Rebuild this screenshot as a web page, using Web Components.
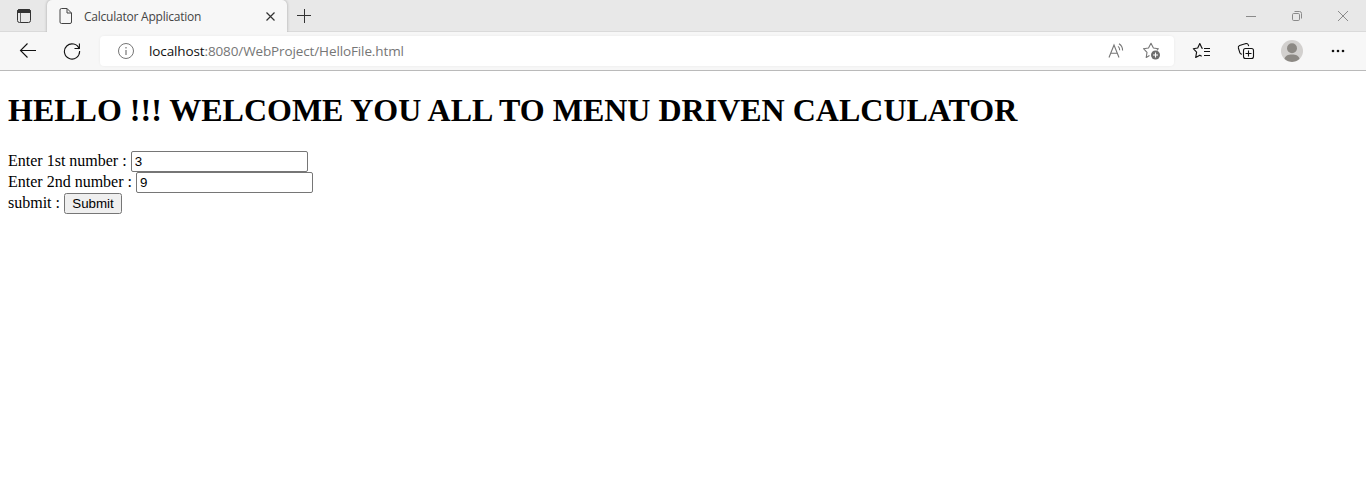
<!DOCTYPE html>
<html lang="en">
<head>
<meta charset="utf-8">
<title>Calculator Application</title>
<style>
html,body{margin:0;height:100%;background:#fff;overflow:hidden}
</style>
</head>
<body>
<browser-window>
  <tab-strip slot="tabs"><browser-tab>Calculator Application</browser-tab></tab-strip>
  <tool-bar slot="toolbar"><address-bar><span slot="host">localhost</span><span slot="path">:8080/WebProject/HelloFile.html</span></address-bar></tool-bar>
  <calculator-page>
    <span slot="title">HELLO !!! WELCOME YOU ALL TO MENU DRIVEN CALCULATOR</span>
    <number-field value="3">Enter 1st number :</number-field>
    <number-field value="9">Enter 2nd number :</number-field>
    <submit-field>submit :</submit-field>
  </calculator-page>
</browser-window>
<script>
const define = (name, html) => {
  const t = document.createElement('template');
  t.innerHTML = html;
  customElements.define(name, class extends HTMLElement {
    constructor() {
      super();
      this.attachShadow({mode: 'open'}).append(t.content.cloneNode(true));
    }
    connectedCallback() {
      const input = this.shadowRoot.querySelector('input');
      if (input) input.value = this.getAttribute('value') || '';
    }
  });
};

define('browser-window', `
<style>:host{display:flex;flex-direction:column;height:477px;width:1366px;background:#fff}</style>
<slot name="tabs"></slot><slot name="toolbar"></slot><slot></slot>`);

define('tab-strip', `
<style>
:host{display:flex;height:32px;background:#e8e8e8;box-shadow:inset 0 -1px #dadada}
svg{display:block;fill:none;flex:none}
.left{width:47px;height:32px;box-sizing:border-box;padding:8px 0 0 16px;border-bottom-right-radius:4px}
.plus{padding:8px 0 0 9px}
.controls{margin-left:auto;display:flex;padding-top:8px;gap:30px;padding-right:15px}
</style>
<div class="left"><svg width="16" height="16" viewBox="0 0 16 16" stroke="#333"><rect x="1.5" y="1.5" width="13" height="13" rx="2"/><path d="M1.5 3.5A2 2 0 0 1 3.5 1.5h9a2 2 0 0 1 2 2V4.5h-13z" fill="#333"/><path d="M4.5 5v9.5" stroke="#666"/></svg></div>
<slot></slot>
<div class="plus"><svg width="16" height="16" viewBox="0 0 16 16" stroke="#333"><path d="M1 7.5h14M8.5 1v14"/></svg></div>
<div class="controls">
<svg width="16" height="16" viewBox="0 0 16 16" stroke="#8a8a8a"><path d="M3 8.5h10"/></svg>
<svg width="16" height="16" viewBox="0 0 16 16" stroke="#8a8a8a"><rect x="3.5" y="5.5" width="7" height="7" rx="1.2"/><path d="M5.5 3.5h5a2 2 0 0 1 2 2v5"/></svg>
<svg width="16" height="16" viewBox="0 0 16 16" stroke="#8a8a8a"><path d="M3 3l10 10M13 3L3 13"/></svg>
</div>`);

define('browser-tab', `
<style>
:host{display:flex;align-items:center;box-sizing:border-box;width:240px;height:32px;background:#f7f7f7;border-radius:5px 5px 0 0;box-shadow:0 0 3px #0000004d;clip-path:inset(0 -4px);padding:0 8px 0 11px;font:12px "Open Sans",sans-serif;color:#444}
svg{fill:none;flex:none}
span{margin-left:10px;flex:1;white-space:nowrap;letter-spacing:-.23px}
</style>
<svg width="16" height="18" viewBox="0 0 16 18" stroke="#444"><path d="M3.5 1.5H9L13.5 6v9a1.5 1.5 0 0 1-1.5 1.5H3.5A1.5 1.5 0 0 1 2 15V3a1.5 1.5 0 0 1 1.5-1.5zM9 1.5V6h4.5"/></svg>
<span><slot></slot></span>
<svg width="16" height="16" viewBox="0 0 16 16" stroke="#333" stroke-width="1.2"><path d="M3.5 4.5l8 8M11.5 4.5l-8 8"/></svg>`);

define('tool-bar', `
<style>
:host{display:flex;align-items:center;box-sizing:border-box;height:39px;background:#f7f7f7;border-bottom:1px solid #bababa;padding:0 18px 0 19px}
svg{display:block;fill:none;flex:none}
.nav,.actions{display:flex;align-items:center}
.nav{gap:26px;width:81px;flex:none}
.actions{padding-left:18px}
.col{margin-left:25px}.user{margin-left:24px}.more{margin-left:26px}
</style>
<div class="nav">
<svg width="18" height="18" viewBox="0 0 18 18" stroke="#111" stroke-width="1.1"><path d="M17 8.5H1.5M8.5 1.5l-7 7 7 7"/></svg>
<svg width="18" height="18" viewBox="0 0 18 18" stroke="#111" stroke-width="1.1"><path d="M16.2 7A7.6 7.6 0 1 0 16.6 9M16.4 1.5v5H11.5"/></svg>
</div>
<slot></slot>
<div class="actions">
<svg width="20" height="18" viewBox="0 0 20 18" stroke="#111" stroke-width="1.15" stroke-linejoin="round"><path d="M12 6.5h6M12 9.5h6M12 13.5h6"/><path d="M10.8 6.2H10L7.8 1.5 5.7 6l-4.4.7 3.3 3.4-.9 5.4 4.1-2.3 1.9 1"/></svg>
<svg class="col" width="20" height="20" viewBox="0 0 20 20" stroke="#111" stroke-width="1.1"><rect x="6.5" y="7.5" width="10" height="10" rx="2"/><path d="M11.5 9.5v6M8.5 12.5h6M5 13.3l-1-.4a2 2 0 0 1-1.2-1.3L1.4 7a2 2 0 0 1 1.2-2.4L9 2.6a2 2 0 0 1 2.3 1.3l.4 1.3"/></svg>
<svg class="user" width="22" height="22" viewBox="0 0 22 22"><circle cx="11" cy="11" r="11" fill="#d2d0ce"/><circle cx="11" cy="8.3" r="5" fill="#8c8984"/><path d="M3.5 19C4 16 7 14.6 11 14.6s7 1.4 7.5 4.4A11 11 0 0 1 3.5 19z" fill="#8c8984"/></svg>
<svg class="more" width="18" height="18" viewBox="0 0 18 18"><g fill="#111"><circle cx="4" cy="9" r="1.3"/><circle cx="9" cy="9" r="1.3"/><circle cx="14" cy="9" r="1.3"/></g></svg>
</div>`);

define('address-bar', `
<style>
:host{display:flex;align-items:center;box-sizing:border-box;width:1074px;height:30px;background:#fff;border-radius:4px;box-shadow:0 0 3px #0000000f;padding:0 12px 0 17px;font:13.5px "Open Sans",sans-serif;color:#767676;flex:none}
svg{fill:none;flex:none}
.url{margin-left:14px;flex:1;white-space:nowrap;letter-spacing:-.12px}
.host{color:#111}
.fav{margin-left:16px}
</style>
<svg width="18" height="18" viewBox="0 0 18 18" stroke="#767676"><circle cx="9" cy="9" r="7.5"/><path d="M9 8v5M9 5v1.4" stroke-width="1.2"/></svg>
<span class="url"><span class="host"><slot name="host"></slot></span><slot name="path"></slot></span>
<svg width="18" height="18" viewBox="0 0 18 18" stroke="#767676" stroke-width="1.1"><path d="M1 15.5L6 3l5 12.5M2.8 11.2h6.4M10 4.4q1.7 1.2 1.7 3.8M11 1.8q3.6 2.2 3.6 6.8"/></svg>
<svg class="fav" width="20" height="20" viewBox="0 0 20 20" stroke="#767676" stroke-width="1.1" stroke-linejoin="round"><path d="M7.5 14.5L4.2 16.5 5 11.3 1.5 7.7l5-.7L9 2.2 11.4 7l5 .7-1.5 1.6"/><circle cx="13.5" cy="14" r="4.5" fill="#6e6e6e" stroke="none"/><path d="M13.5 11.5v5M11 14h5" stroke="#fff"/></svg>`);

define('calculator-page', `
<style>
:host{display:block;padding:21px 8px 0;color:#000;font:16px "Liberation Serif",serif}
h1{margin:0 0 22px;font-size:32px;line-height:37px;font-weight:bold;white-space:nowrap}
</style>
<h1><slot name="title"></slot></h1><slot></slot>`);

const row = `:host{display:flex;align-items:flex-start;height:21px;font:16px/20px "Liberation Serif",serif;white-space:nowrap}`;
define('number-field', `
<style>${row}
input{box-sizing:border-box;width:177px;height:21px;margin:0 0 0 4px;padding:1px 3px;border:1px solid #767676;border-radius:2px;background:#fff;color:#000;font:13.333px "Liberation Sans",sans-serif;outline:0}
</style><span><slot></slot></span><input type="text">`);
define('submit-field', `
<style>${row}
button{box-sizing:border-box;width:58px;height:21px;margin:0 0 0 4px;padding:0;border:1px solid #767676;border-radius:2.5px;background:#efefef;color:#000;font:13.333px "Liberation Sans",sans-serif}
</style><span><slot></slot></span><button>Submit</button>`);
</script>
</body>
</html>
